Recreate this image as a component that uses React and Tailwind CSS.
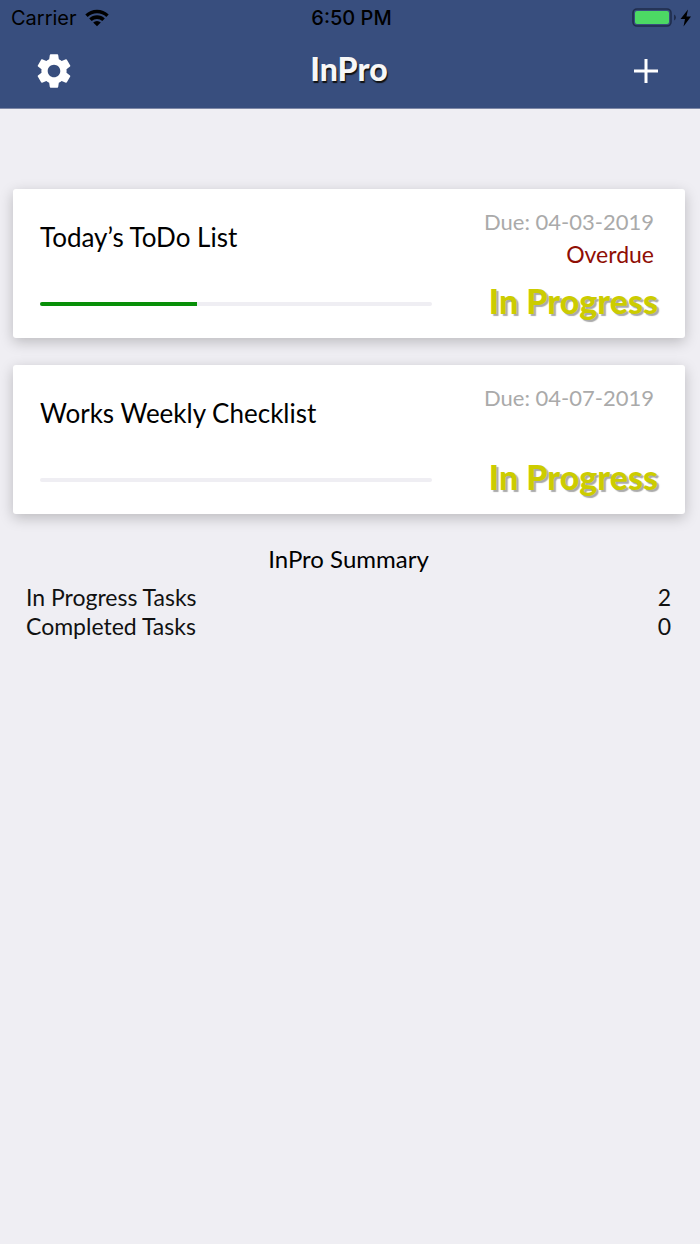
import { MdSettings } from "react-icons/md";

const tasks = [
  { id: 1, title: "Today’s ToDo List", due: "04-03-2019", overdue: true, progress: 40 },
  { id: 2, title: "Works Weekly Checklist", due: "04-07-2019", overdue: false, progress: 0 },
];

function StatusBar() {
  return (
    <div className="grid grid-cols-3 items-center h-9 pl-[11px] pr-2 font-['Inter',sans-serif] text-xl leading-6 text-black">
      <div className="flex items-center gap-2">
        <span>Carrier</span>
        <svg viewBox="0 0 24 18" className="w-6 h-[18px]" aria-hidden="true">
          <path d="M.3 5.4a16.8 16.8 0 0 1 23.4 0l-2.4 2.5a13.4 13.4 0 0 0-18.6 0z" />
          <path d="M4.2 9.5a11.2 11.2 0 0 1 15.6 0l-2.5 2.5a7.7 7.7 0 0 0-10.6 0z" />
          <path d="M8.2 13.5a5.5 5.5 0 0 1 7.6 0L12 17.2z" />
        </svg>
      </div>
      <span className="justify-self-center font-medium">6:50 PM</span>
      <svg viewBox="0 0 60 20" className="justify-self-end w-15 h-5" aria-hidden="true">
        <rect x="1" y="1" width="38" height="17" rx="4" fill="none" stroke="#1f2c4b" strokeWidth="1.6" />
        <rect x="3" y="3" width="34" height="13" rx="2" fill="#4cd964" />
        <path d="M42 6.5q2 .8 2 3t-2 3z" fill="#1f2c4b" />
        <path d="M56 1.5 48.5 11H53l-1.5 7.5L59 8.5h-4.5z" />
      </svg>
    </div>
  );
}

function Header() {
  return (
    <header className="bg-[#384e7e] border-b border-[#7d87a6]">
      <StatusBar />
      <div className="grid grid-cols-3 items-center h-[72px] pb-[2px] pl-[33px] pr-[35px] text-white">
        <button type="button" aria-label="Settings" className="justify-self-start">
          <MdSettings className="size-[42px]" />
        </button>
        <h1 className="justify-self-center pb-1 font-black text-[32px] leading-10 text-[#f7f7f7] [text-shadow:1px_2px_1px_#111]">
          InPro
        </h1>
        <button type="button" aria-label="Add list" className="justify-self-end p-[6px]">
          <svg viewBox="0 0 26 26" className="size-[26px]" fill="none" stroke="currentColor" strokeWidth="3">
            <path d="M13 1v24M1 13h24" />
          </svg>
        </button>
      </div>
    </header>
  );
}

function TaskCard({ task }) {
  return (
    <li className="flex gap-[54px] h-[149px] px-[27px] rounded-[3px] bg-white shadow-[0_4px_14px_rgba(0,0,0,0.22)]">
      <div className="flex-1 flex flex-col justify-between py-8">
        <h2 className="text-[26px] leading-8 text-black">{task.title}</h2>
        <div
          role="progressbar"
          aria-label={task.title}
          aria-valuenow={task.progress}
          className="h-1 rounded-full bg-[#efeef3] overflow-hidden"
        >
          <div className="h-full bg-[#088f08]" style={{ width: `${task.progress}%` }} />
        </div>
      </div>
      <div className="flex flex-col items-end justify-between w-[172px] pt-[17px] pb-[17px] whitespace-nowrap">
        <div className="pr-1 text-right leading-8">
          <p className="text-[22px] text-[#aaaaaa]">Due: {task.due}</p>
          {task.overdue && <p className="text-[23px] text-[#8f0e04]">Overdue</p>}
        </div>
        <p className="font-black text-[34px] leading-10 text-[#cccc00] [text-shadow:2px_2px_1px_#aaa]">
          In Progress
        </p>
      </div>
    </li>
  );
}

export default function App() {
  return (
    <div className="min-h-screen bg-[#efeef3] font-['Lato',sans-serif]">
      <Header />
      <main className="pt-20">
        <ul className="flex flex-col gap-[27px] pl-[13px] pr-[15px]">
          {tasks.map((task) => (
            <TaskCard key={task.id} task={task} />
          ))}
        </ul>
        <section className="pt-[29px] pl-[26px] pr-[29px] text-[#111]">
          <h2 className="text-center text-2xl leading-8 text-black">InPro Summary</h2>
          <dl className="pt-2 text-[23px] leading-[29px]">
            <div className="flex justify-between">
              <dt>In Progress Tasks</dt>
              <dd>{tasks.length}</dd>
            </div>
            <div className="flex justify-between">
              <dt>Completed Tasks</dt>
              <dd>0</dd>
            </div>
          </dl>
        </section>
      </main>
    </div>
  );
}
